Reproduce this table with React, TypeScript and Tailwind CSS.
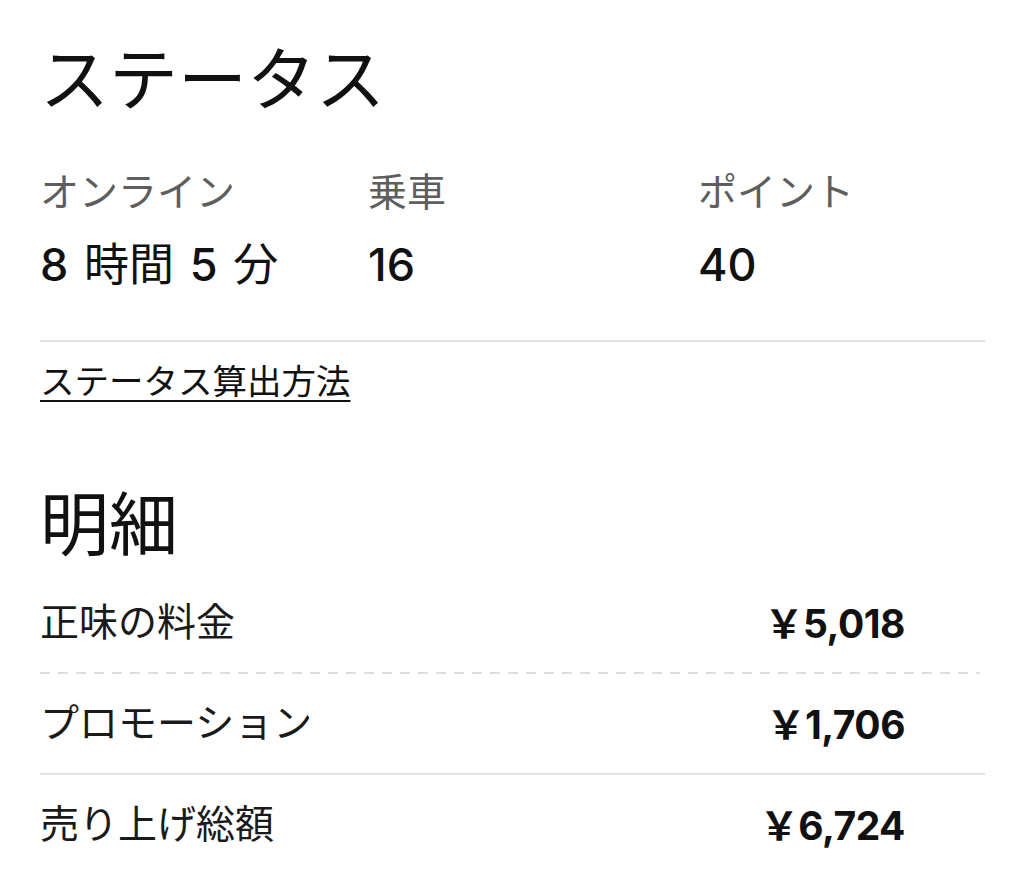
const stats = [
  { label: 'オンライン', value: (
    <>
      8<span className="mx-[3px] font-normal"> 時間 </span>5<span className="ml-[3px] font-normal"> 分</span>
    </>
  ) },
  { label: '乗車', value: '16' },
  { label: 'ポイント', value: '40' },
];

const rows = [
  { label: '正味の料金', amount: '5,018', line: 'dashed' },
  { label: 'プロモーション', amount: '1,706', line: 'solid' },
  { label: '売り上げ総額', amount: '6,724', line: '' },
];

export default function App() {
  return (
    <div
      className="min-h-[878px] bg-white pl-[40px] pr-[39px] pt-[40px] text-[#111]"
      style={{ fontFamily: 'Inter, "Noto Sans CJK JP", sans-serif' }}
    >
      <h1 className="text-[69px] leading-[80px] font-normal">ステータス</h1>

      <div className="mt-[50px] grid grid-cols-[328px_330px_1fr] border-b-2 border-[#e2e2e2] pb-[50px]">
        {stats.map((s) => (
          <div key={s.label}>
            <div className="text-[39px] leading-[44px] text-[#5e5e5e]">{s.label}</div>
            <div className="mt-[26px] text-[45px] leading-[50px] font-medium">{s.value}</div>
          </div>
        ))}
      </div>

      <a
        href="#"
        className="mt-[18px] inline-block text-[34.5px] leading-[44px] underline decoration-2 underline-offset-[6px] text-[#111]"
      >
        ステータス算出方法
      </a>

      <h2 className="mt-[81px] text-[69px] leading-[80px] font-normal">明細</h2>

      <div className="mt-[8px]">
        {rows.map((r) => (
          <div key={r.label}>
            <div className="flex h-[99px] items-center justify-between pr-[80px]">
              <span className="text-[39px] text-[#1a1a1a]">{r.label}</span>
              <span className="text-[39px] font-bold tracking-[-0.5px]">
                <span className="font-['Noto_Sans_CJK_JP'] font-bold">￥</span>
                {r.amount}
              </span>
            </div>
            {r.line === 'dashed' && (
              <div className="mr-[5px] h-[2px] bg-[repeating-linear-gradient(90deg,#dedede_0_10px,transparent_10px_18px)]" />
            )}
            {r.line === 'solid' && <div className="h-[2px] bg-[#e2e2e2]" />}
          </div>
        ))}
      </div>
    </div>
  );
}
